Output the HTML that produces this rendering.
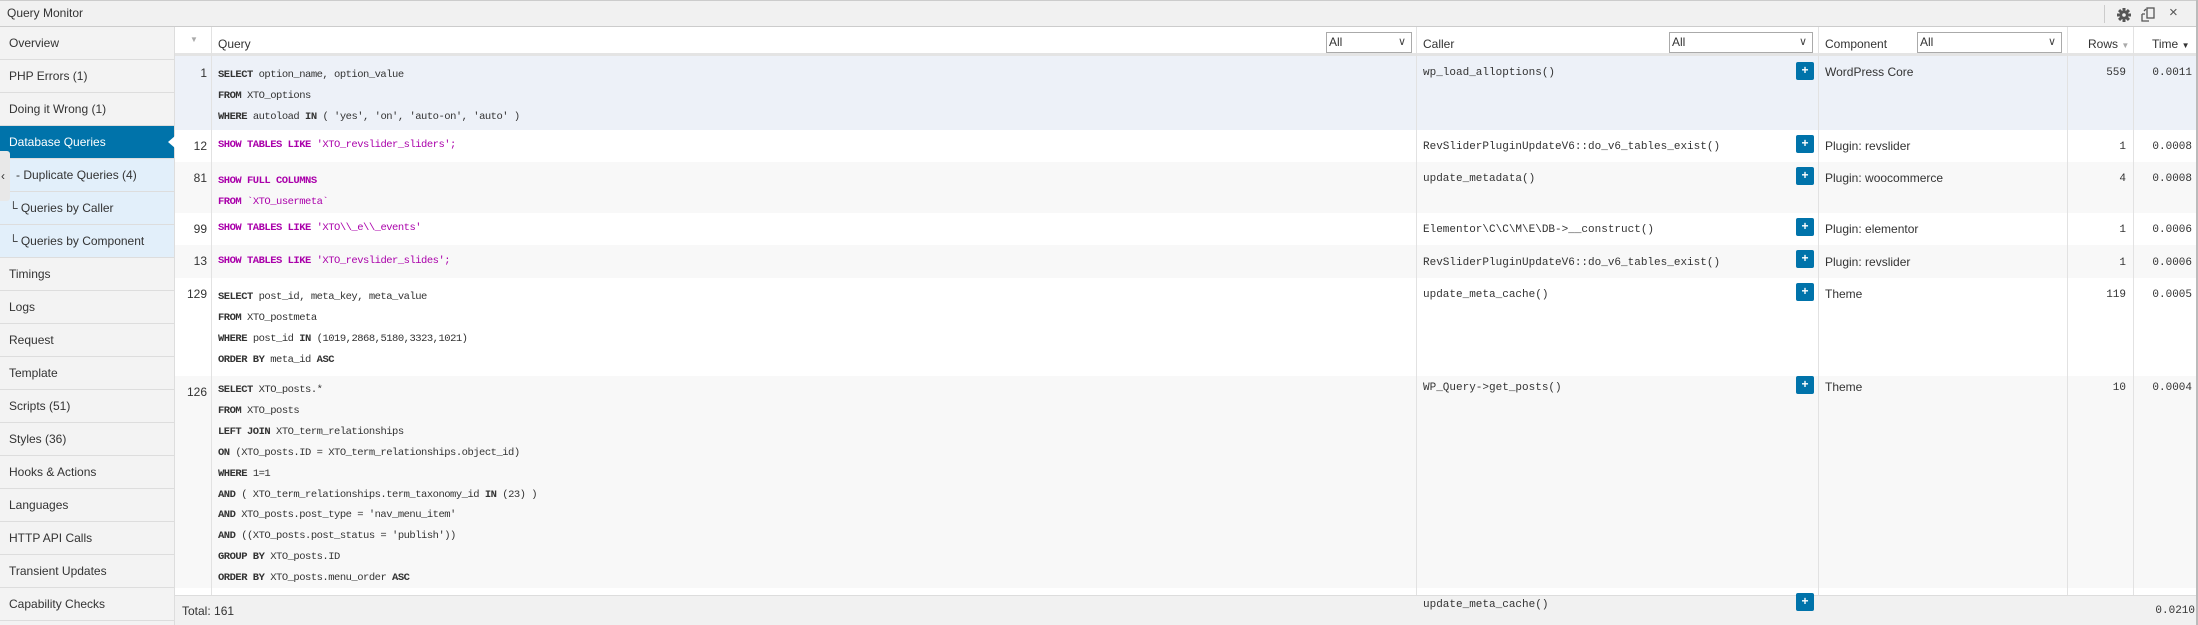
<!DOCTYPE html>
<html><head><meta charset="utf-8"><style>
*{box-sizing:border-box;margin:0;padding:0}
body{width:2198px;height:625px;overflow:hidden;background:#fff;font-family:"Liberation Sans",sans-serif;font-size:12px;color:#333;position:relative}
.a{position:absolute}
.title{left:0;top:0;width:2198px;height:27px;background:#f1f1f1;border-top:1px solid #ccc;border-bottom:1px solid #ccc}
.side{left:0;top:27px;width:175px;height:598px;background:#f3f3f3;border-right:1px solid #ddd}
.si{height:33px;line-height:32px;padding-left:9px;border-bottom:1px solid #ddd;font-size:12px;white-space:nowrap}
.sel{background:#0073aa;color:#fff;position:relative}
.sub{background:#e2effa}
.mono{font-family:"Liberation Mono",monospace;font-size:11px}
.q{font-size:10.5px;letter-spacing:-0.5px}
.vl{position:absolute;top:27px;width:1px;background:#e2e2e2;height:568px}
.row{position:absolute;left:175px;width:2021px}
.c{position:absolute;white-space:pre}
.k{font-weight:bold}
.m{color:#a0a}
.plus{position:absolute;left:1796px;width:18px;height:18px;background:#0073aa;border-radius:2px;color:#fff;font-weight:bold;font-size:12px;text-align:center;line-height:17px}
.selbox{position:absolute;top:32px;height:21px;border:1px solid #aaa;background:#fff;font-size:12px;line-height:19px;padding-left:2px}
.selbox:after{content:"\2228";position:absolute;right:5px;top:0;font-size:11px;color:#444}
.hd{position:absolute;top:37px;font-size:12px}
.cp{font-size:12px}
</style></head><body>
<div class="a title"><span style="position:absolute;left:7px;top:5px;font-size:12px">Query Monitor</span>
<div class="a" style="left:2104px;top:4px;width:1px;height:18px;background:#ccc"></div>
<svg class="a" style="left:2117px;top:7px" width="14" height="14" viewBox="0 0 14 14"><g fill="#555"><circle cx="7" cy="7" r="4.5"/><rect x="5.5" y="0" width="3" height="14"/><rect x="0" y="5.5" width="14" height="3"/><rect x="5.5" y="0" width="3" height="14" transform="rotate(45 7 7)"/><rect x="5.5" y="0" width="3" height="14" transform="rotate(-45 7 7)"/></g><circle cx="7" cy="7" r="1.8" fill="#f1f1f1"/></svg>
<svg class="a" style="left:2141px;top:6px" width="14" height="15" viewBox="0 0 14 15"><g fill="none" stroke="#555" stroke-width="1.3"><rect x="6" y="1" width="7" height="10"/><path d="M1 7v7h7M1 7h3M3 4l2-2"/></g></svg>
<span class="a" style="left:2169px;top:3px;font-size:15px;color:#555">×</span></div>
<div class="a" style="left:2196px;top:0;width:2px;height:625px;background:#bbb"></div>
<div class="a side">
<div class="si">Overview</div><div class="si">PHP Errors (1)</div><div class="si">Doing it Wrong (1)</div>
<div class="si sel">Database Queries<span style="position:absolute;right:-1px;top:10px;width:0;height:0;border-top:6px solid transparent;border-bottom:6px solid transparent;border-right:7px solid #fff"></span></div>
<div class="si sub" style="padding-left:16px">- Duplicate Queries (4)</div>
<div class="si sub">└ Queries by Caller</div><div class="si sub">└ Queries by Component</div>
<div class="si">Timings</div><div class="si">Logs</div><div class="si">Request</div><div class="si">Template</div><div class="si">Scripts (51)</div><div class="si">Styles (36)</div><div class="si">Hooks &amp; Actions</div><div class="si">Languages</div><div class="si">HTTP API Calls</div><div class="si">Transient Updates</div><div class="si">Capability Checks</div>
</div>
<div class="a" style="left:0;top:151px;width:10px;height:50px;background:#e8e8e8;border-radius:0 3px 3px 0;font-size:12px;line-height:50px;padding-left:1px;color:#333">‹</div>
<div class="a" style="left:175px;top:27px;width:2021px;height:29px;background:#fff;border-bottom:3px solid #e4e4e4"></div>
<span class="a" style="left:190px;top:35px;font-size:8px;color:#aaa">▼</span>
<span class="hd" style="left:218px">Query</span>
<div class="selbox" style="left:1326px;width:86px">All</div>
<span class="hd" style="left:1423px">Caller</span>
<div class="selbox" style="left:1669px;width:144px">All</div>
<span class="hd" style="left:1825px">Component</span>
<div class="selbox" style="left:1917px;width:145px">All</div>
<span class="hd" style="left:2088px">Rows <span style="font-size:8px;color:#aaa">▼</span></span>
<span class="hd" style="left:2152px">Time <span style="font-size:8px;color:#333">▼</span></span>
<div class="row" style="top:56px;height:74px;background:#edf1f8"></div>
<div class="row" style="top:130px;height:32px;background:#fff"></div>
<div class="row" style="top:162px;height:51px;background:#f8f8f8"></div>
<div class="row" style="top:213px;height:32px;background:#fff"></div>
<div class="row" style="top:245px;height:33px;background:#f8f8f8"></div>
<div class="row" style="top:278px;height:98px;background:#fff"></div>
<div class="row" style="top:376px;height:212px;background:#f8f8f8"></div>
<div class="vl" style="left:211px"></div><div class="vl" style="left:1416px"></div><div class="vl" style="left:1818px"></div><div class="vl" style="left:2067px"></div><div class="vl" style="left:2133px"></div>
<div class="a" style="left:175px;top:595px;width:2021px;height:30px;background:#f1f1f1;border-top:1px solid #ddd"></div>
<div class="mono">
<div class="c cp" style="left:175px;width:32px;text-align:right;top:66px;font-family:'Liberation Sans',sans-serif">1</div>
<div class="c cp" style="left:175px;width:32px;text-align:right;top:139px;font-family:'Liberation Sans',sans-serif">12</div>
<div class="c cp" style="left:175px;width:32px;text-align:right;top:171px;font-family:'Liberation Sans',sans-serif">81</div>
<div class="c cp" style="left:175px;width:32px;text-align:right;top:222px;font-family:'Liberation Sans',sans-serif">99</div>
<div class="c cp" style="left:175px;width:32px;text-align:right;top:254px;font-family:'Liberation Sans',sans-serif">13</div>
<div class="c cp" style="left:175px;width:32px;text-align:right;top:287px;font-family:'Liberation Sans',sans-serif">129</div>
<div class="c cp" style="left:175px;width:32px;text-align:right;top:385px;font-family:'Liberation Sans',sans-serif">126</div>
<div class="c q" style="left:218px;top:65px;line-height:21px"><span class="k">SELECT</span> option_name, option_value
<span class="k">FROM</span> XTO_options
<span class="k">WHERE</span> autoload <span class="k">IN</span> ( 'yes', 'on', 'auto-on', 'auto' )</div>
<div class="c m q" style="left:218px;top:139px"><span class="k">SHOW TABLES LIKE</span> 'XTO_revslider_sliders';</div>
<div class="c m q" style="left:218px;top:171px;line-height:21px"><span class="k">SHOW FULL COLUMNS</span>
<span class="k">FROM</span> `XTO_usermeta`</div>
<div class="c m q" style="left:218px;top:222px"><span class="k">SHOW TABLES LIKE</span> 'XTO\\_e\\_events'</div>
<div class="c m q" style="left:218px;top:255px"><span class="k">SHOW TABLES LIKE</span> 'XTO_revslider_slides';</div>
<div class="c q" style="left:218px;top:287px;line-height:21px"><span class="k">SELECT</span> post_id, meta_key, meta_value
<span class="k">FROM</span> XTO_postmeta
<span class="k">WHERE</span> post_id <span class="k">IN</span> (1019,2868,5180,3323,1021)
<span class="k">ORDER BY</span> meta_id <span class="k">ASC</span></div>
<div class="c q" style="left:218px;top:380px;line-height:20.9px"><span class="k">SELECT</span> XTO_posts.*
<span class="k">FROM</span> XTO_posts
<span class="k">LEFT JOIN</span> XTO_term_relationships
<span class="k">ON</span> (XTO_posts.ID = XTO_term_relationships.object_id)
<span class="k">WHERE</span> 1=1
<span class="k">AND</span> ( XTO_term_relationships.term_taxonomy_id <span class="k">IN</span> (23) )
<span class="k">AND</span> XTO_posts.post_type = 'nav_menu_item'
<span class="k">AND</span> ((XTO_posts.post_status = 'publish'))
<span class="k">GROUP BY</span> XTO_posts.ID
<span class="k">ORDER BY</span> XTO_posts.menu_order <span class="k">ASC</span></div>
<div class="c" style="left:1423px;top:67px">wp_load_alloptions()</div>
<div class="c" style="left:1423px;top:141px">RevSliderPluginUpdateV6::do_v6_tables_exist()</div>
<div class="c" style="left:1423px;top:173px">update_metadata()</div>
<div class="c" style="left:1423px;top:224px">Elementor\C\C\M\E\DB->__construct()</div>
<div class="c" style="left:1423px;top:257px">RevSliderPluginUpdateV6::do_v6_tables_exist()</div>
<div class="c" style="left:1423px;top:289px">update_meta_cache()</div>
<div class="c" style="left:1423px;top:382px">WP_Query->get_posts()</div>
<div class="c" style="left:1423px;top:599px">update_meta_cache()</div>
<div class="c" style="left:2067px;width:59px;text-align:right;top:67px">559</div>
<div class="c" style="left:2067px;width:59px;text-align:right;top:141px">1</div>
<div class="c" style="left:2067px;width:59px;text-align:right;top:173px">4</div>
<div class="c" style="left:2067px;width:59px;text-align:right;top:224px">1</div>
<div class="c" style="left:2067px;width:59px;text-align:right;top:257px">1</div>
<div class="c" style="left:2067px;width:59px;text-align:right;top:289px">119</div>
<div class="c" style="left:2067px;width:59px;text-align:right;top:382px">10</div>
<div class="c" style="left:2133px;width:59px;text-align:right;top:67px">0.0011</div>
<div class="c" style="left:2133px;width:59px;text-align:right;top:141px">0.0008</div>
<div class="c" style="left:2133px;width:59px;text-align:right;top:173px">0.0008</div>
<div class="c" style="left:2133px;width:59px;text-align:right;top:224px">0.0006</div>
<div class="c" style="left:2133px;width:59px;text-align:right;top:257px">0.0006</div>
<div class="c" style="left:2133px;width:59px;text-align:right;top:289px">0.0005</div>
<div class="c" style="left:2133px;width:59px;text-align:right;top:382px">0.0004</div>
<div class="c" style="left:2133px;width:62px;text-align:right;top:605px">0.0210</div>
</div>
<div class="c cp" style="left:1825px;top:65px">WordPress Core</div>
<div class="c cp" style="left:1825px;top:139px">Plugin: revslider</div>
<div class="c cp" style="left:1825px;top:171px">Plugin: woocommerce</div>
<div class="c cp" style="left:1825px;top:222px">Plugin: elementor</div>
<div class="c cp" style="left:1825px;top:255px">Plugin: revslider</div>
<div class="c cp" style="left:1825px;top:287px">Theme</div>
<div class="c cp" style="left:1825px;top:380px">Theme</div>
<div class="c cp" style="left:182px;top:604px">Total: 161</div>
<div class="plus" style="top:62px">+</div>
<div class="plus" style="top:135px">+</div>
<div class="plus" style="top:167px">+</div>
<div class="plus" style="top:218px">+</div>
<div class="plus" style="top:250px">+</div>
<div class="plus" style="top:283px">+</div>
<div class="plus" style="top:376px">+</div>
<div class="plus" style="top:593px">+</div>
</body></html>
